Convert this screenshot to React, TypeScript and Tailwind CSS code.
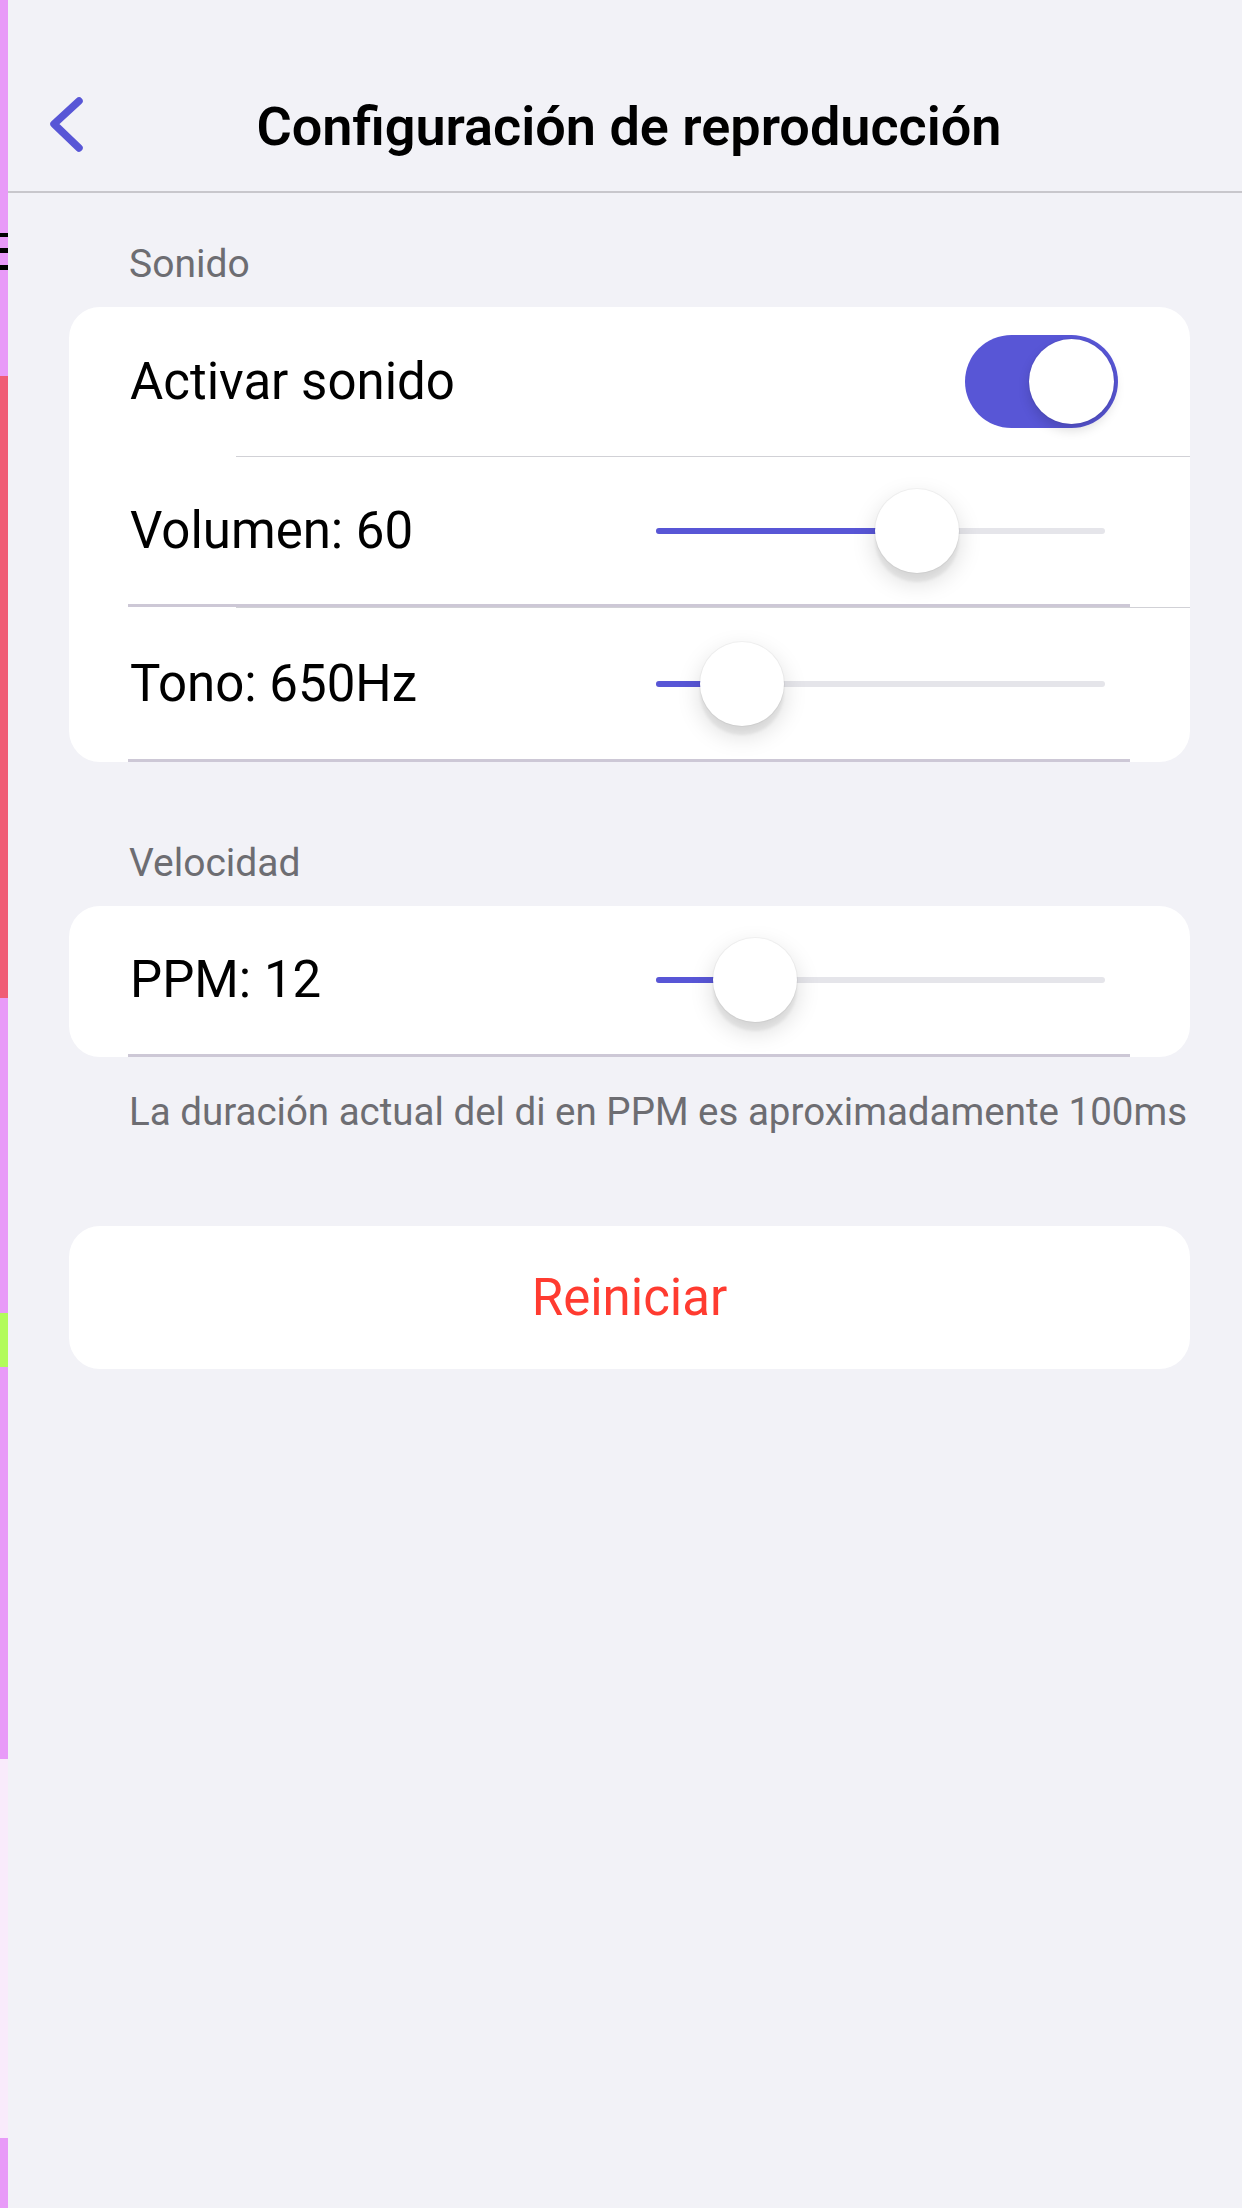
import React from 'react';

const INDIGO = '#5856d6';

const Strip: React.FC = () => (
  <div className="flex flex-col w-[8px] shrink-0">
    <div className="h-[233px] bg-[#e89af8]" />
    <div className="h-[4px] bg-black" />
    <div className="h-[11px] bg-[#e89af8]" />
    <div className="h-[5px] bg-black" />
    <div className="h-[12px] bg-[#e89af8]" />
    <div className="h-[5px] bg-black" />
    <div className="h-[106px] bg-[#e89af8]" />
    <div className="h-[622px] bg-[#f05c75]" />
    <div className="h-[315px] bg-[#e89af8]" />
    <div className="h-[54px] bg-[#b2fb5b]" />
    <div className="h-[392px] bg-[#e89af8]" />
    <div className="h-[379px] bg-[#f9ebfb]" />
    <div className="flex-1 bg-[#e89af8]" />
  </div>
);

const Slider: React.FC<{ pos: number }> = ({ pos }) => (
  <div className="relative w-[449px] h-[84px] flex items-center">
    <div className="h-[6px] w-full rounded-full bg-[#e5e5ea]" />
    <div className="absolute left-0 h-[6px] rounded-full bg-[#5856d6]" style={{ width: pos }} />
    <div
      className="absolute top-0 size-[84px] rounded-full bg-white shadow-[0_9px_24px_rgba(0,0,0,0.15),0_9px_3px_rgba(0,0,0,0.06),0_0_0_1px_rgba(0,0,0,0.04)]"
      style={{ left: pos - 42 }}
    />
  </div>
);

const SliderRow: React.FC<{ label: string; pos: number; height: string }> = ({ label, pos, height }) => (
  <div className={`${height} pl-[59px] pr-[60px] flex`}>
    <div className="flex-1 flex items-center justify-between pl-[2px] pr-[25px] border-b-[3px] border-[#cdc8d6]">
      <span className="text-[51px] leading-[60px] text-black">{label}</span>
      <Slider pos={pos} />
    </div>
  </div>
);

const Separator: React.FC = () => <div className="ml-[167px] h-px bg-[#d1d1d6]" />;

const SectionHeader: React.FC<{ title: string; className: string }> = ({ title, className }) => (
  <div className={`${className} pl-[121px] text-[39px] leading-[46px] text-[#6d6d72]`}>{title}</div>
);

export default function App() {
  return (
    <div className="flex w-[1242px] h-[2208px] bg-[#f2f2f7] font-['Roboto',sans-serif] overflow-hidden">
      <Strip />
      <div className="flex-1 flex flex-col">
        {/* status bar */}
        <div className="h-[63px]" />

        {/* nav bar */}
        <div className="relative h-[130px] flex items-center justify-center border-b-2 border-[#c8c7cc]">
          <svg className="absolute left-[38px] top-[31px]" width="40" height="62" viewBox="0 0 40 62" fill="none">
            <polyline points="33,7 8,30 33,54" stroke={INDIGO} strokeWidth="7.5" strokeLinecap="round" strokeLinejoin="round" />
          </svg>
          <h1 className="pl-[8px] text-[54px] leading-[64px] font-semibold text-black">Configuración de reproducción</h1>
        </div>

        <SectionHeader title="Sonido" className="mt-[48px]" />

        <div className="mt-[20px] ml-[61px] mr-[52px] bg-white rounded-[31px] flex flex-col">
          <div className="h-[150px] flex flex-col">
            <div className="flex-1 flex items-center justify-between pl-[61px] pr-[72px]">
              <span className="text-[51px] leading-[60px] text-black">Activar sonido</span>
              <div className="w-[153px] h-[93px] rounded-full bg-[#5856d6] flex items-center justify-end p-[4px]">
                <div className="size-[85px] rounded-full bg-white shadow-[0_6px_12px_rgba(0,0,0,0.15),0_0_0_1px_rgba(0,0,0,0.04)]" />
              </div>
            </div>
            <Separator />
          </div>
          <div className="h-[151px] flex flex-col">
            <SliderRow label="Volumen: 60" pos={261} height="flex-1" />
            <Separator />
          </div>
          <SliderRow label="Tono: 650Hz" pos={86} height="h-[154px]" />
        </div>

        <SectionHeader title="Velocidad" className="mt-[78px]" />

        <div className="mt-[20px] ml-[61px] mr-[52px] bg-white rounded-[31px] flex flex-col">
          <SliderRow label="PPM: 12" pos={99} height="h-[151px]" />
        </div>

        <div className="mt-[32px] pl-[121px] text-[38.5px] leading-[46px] text-[#6d6d72]">
          La duración actual del di en PPM es aproximadamente 100ms
        </div>

        <button className="mt-[91px] ml-[61px] mr-[52px] h-[143px] bg-white rounded-[31px] flex items-center justify-center">
          <span className="text-[51px] leading-[60px] text-[#ff3b30]">Reiniciar</span>
        </button>
      </div>
    </div>
  );
}
